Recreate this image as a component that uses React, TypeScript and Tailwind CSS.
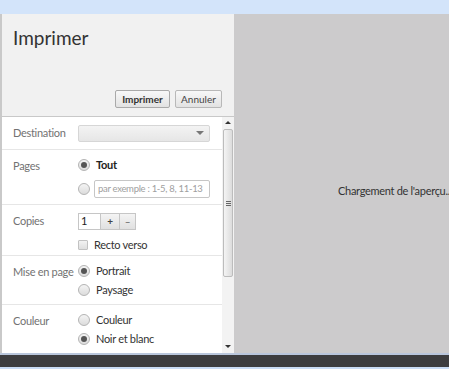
import React from 'react';

const Radio = ({ checked }: { checked?: boolean }) => (
  <span className="flex h-[12px] w-[12px] shrink-0 items-center justify-center rounded-full border border-[#b4b4b4] bg-gradient-to-b from-[#f4f4f4] to-[#dcdcdc]">
    {checked && <span className="h-[6px] w-[6px] rounded-full bg-[#555]" />}
  </span>
);

const Row = ({ label, className, children }: { label: string; className: string; children: React.ReactNode }) => (
  <div className={`flex border-b border-[#e6e6e6] pl-[11px] ${className}`}>
    <div className="w-[65px] shrink-0 whitespace-nowrap text-[#727272]">{label}</div>
    <div className="flex flex-col">{children}</div>
  </div>
);

export default function App() {
  return (
    <div className="flex h-[369px] w-[449px] flex-col overflow-hidden bg-[#d3e4fa] font-['Lato',sans-serif] text-[11px] tracking-[-0.3px] text-[#333]">
      <div className="h-[14px] shrink-0 bg-[#d3e4fa]" />
      <div className="flex h-[339px] shrink-0">
        <div className="flex w-[234px] shrink-0 flex-col border-l-2 border-[#c9c9c9]">
          <div className="flex h-[103px] shrink-0 flex-col border-b border-[#c8c8c8] bg-[#f1f1f1] pl-[11px] pr-[12px]">
            <h1 className="mt-[10px] text-[19px] leading-[28px] tracking-normal text-[#333]">Imprimer</h1>
            <div className="mt-auto mb-[8px] flex justify-end gap-[5px] tracking-normal">
              <button className="h-[18px] w-[55px] rounded-[2px] border border-[#a9a9a9] bg-gradient-to-b from-[#f8f8f8] to-[#e2e2e2] text-[10px] font-bold leading-none text-[#333]">
                Imprimer
              </button>
              <button className="h-[18px] w-[47px] rounded-[2px] border border-[#b8b8b8] bg-gradient-to-b from-[#f8f8f8] to-[#e2e2e2] text-[10px] leading-none text-[#444]">
                Annuler
              </button>
            </div>
          </div>
          <div className="flex min-h-0 flex-1 bg-white">
            <div className="min-w-0 flex-1 overflow-hidden">
              <Row label="Destination" className="h-[33px] items-center">
                <div className="flex h-[17px] w-[132px] items-center justify-end rounded-[2px] border border-[#d6d6d6] bg-gradient-to-b from-[#f3f3f3] to-[#e6e6e6] pr-[5px]">
                  <span className="h-0 w-0 border-x-[4px] border-t-[4px] border-x-transparent border-t-[#777]" />
                </div>
              </Row>
              <Row label="Pages" className="h-[55px] pt-[8px]">
                <div className="flex h-[14px] items-center gap-[6px]">
                  <Radio checked />
                  <span className="font-bold text-[#222]">Tout</span>
                </div>
                <div className="mt-[8px] flex items-center gap-[4px]">
                  <Radio />
                  <div className="flex h-[18px] w-[116px] items-center overflow-hidden whitespace-nowrap rounded-[2px] border border-[#c6c6c6] pl-[3px] text-[9.5px] text-[#a0a0a0]">
                    par exemple : 1-5, 8, 11-13
                  </div>
                </div>
              </Row>
              <Row label="Copies" className="h-[51px] pt-[8px]">
                <div className="flex h-[17px]">
                  <div className="flex w-[23px] items-center border border-[#c6c6c6] pl-[2px] text-[#222]">1</div>
                  <div className="flex w-[18px] items-center justify-center border-y border-[#c6c6c6] bg-gradient-to-b from-[#f4f4f4] to-[#e0e0e0] text-[10px] font-bold text-[#444]">+</div>
                  <div className="flex w-[17px] items-center justify-center border border-[#c6c6c6] bg-gradient-to-b from-[#f4f4f4] to-[#e0e0e0] text-[10px] text-[#555]">–</div>
                </div>
                <div className="mt-[7px] flex items-center gap-[6px]">
                  <span className="h-[10px] w-[10px] rounded-[1px] border border-[#c2c2c2] bg-gradient-to-b from-[#f2f2f2] to-[#dedede]" />
                  <span>Recto verso</span>
                </div>
              </Row>
              <Row label="Mise en page" className="h-[49px] pt-[8px]">
                <div className="flex h-[14px] items-center gap-[6px]">
                  <Radio checked />
                  <span>Portrait</span>
                </div>
                <div className="mt-[5px] flex h-[14px] items-center gap-[6px]">
                  <Radio />
                  <span>Paysage</span>
                </div>
              </Row>
              <Row label="Couleur" className="h-[49px] pt-[8px]">
                <div className="flex h-[14px] items-center gap-[6px]">
                  <Radio />
                  <span>Couleur</span>
                </div>
                <div className="mt-[5px] flex h-[14px] items-center gap-[6px]">
                  <Radio checked />
                  <span>Noir et blanc</span>
                </div>
              </Row>
            </div>
            <div className="flex w-[12px] shrink-0 flex-col items-center bg-[#f3f3f3]">
              <span className="mt-[4px] h-0 w-0 border-x-[3px] border-b-[3px] border-x-transparent border-b-[#333]" />
              <div className="mt-[5px] flex h-[148px] w-[10px] items-center justify-center rounded-[2px] border border-[#bcbcbc] bg-gradient-to-r from-[#f4f4f4] to-[#dcdcdc]">
                <div className="flex flex-col gap-[1px]">
                  <span className="h-px w-[5px] bg-[#666]" />
                  <span className="h-px w-[5px] bg-[#666]" />
                  <span className="h-px w-[5px] bg-[#666]" />
                </div>
              </div>
              <span className="mt-auto mb-[5px] h-0 w-0 border-x-[3px] border-t-[3px] border-x-transparent border-t-[#333]" />
            </div>
          </div>
        </div>
        <div className="flex min-w-0 flex-1 items-center overflow-hidden bg-[#cccbcc] pl-[104px] pt-[15px]">
          <span className="whitespace-nowrap text-[#333]">Chargement de l'aperçu..</span>
        </div>
      </div>
      <div className="h-[2px] shrink-0 bg-[#b9c6dc]" />
      <div className="h-[12px] shrink-0 bg-[#3d3d3f]" />
      <div className="h-[2px] shrink-0 bg-[#c9dcf5]" />
    </div>
  );
}
